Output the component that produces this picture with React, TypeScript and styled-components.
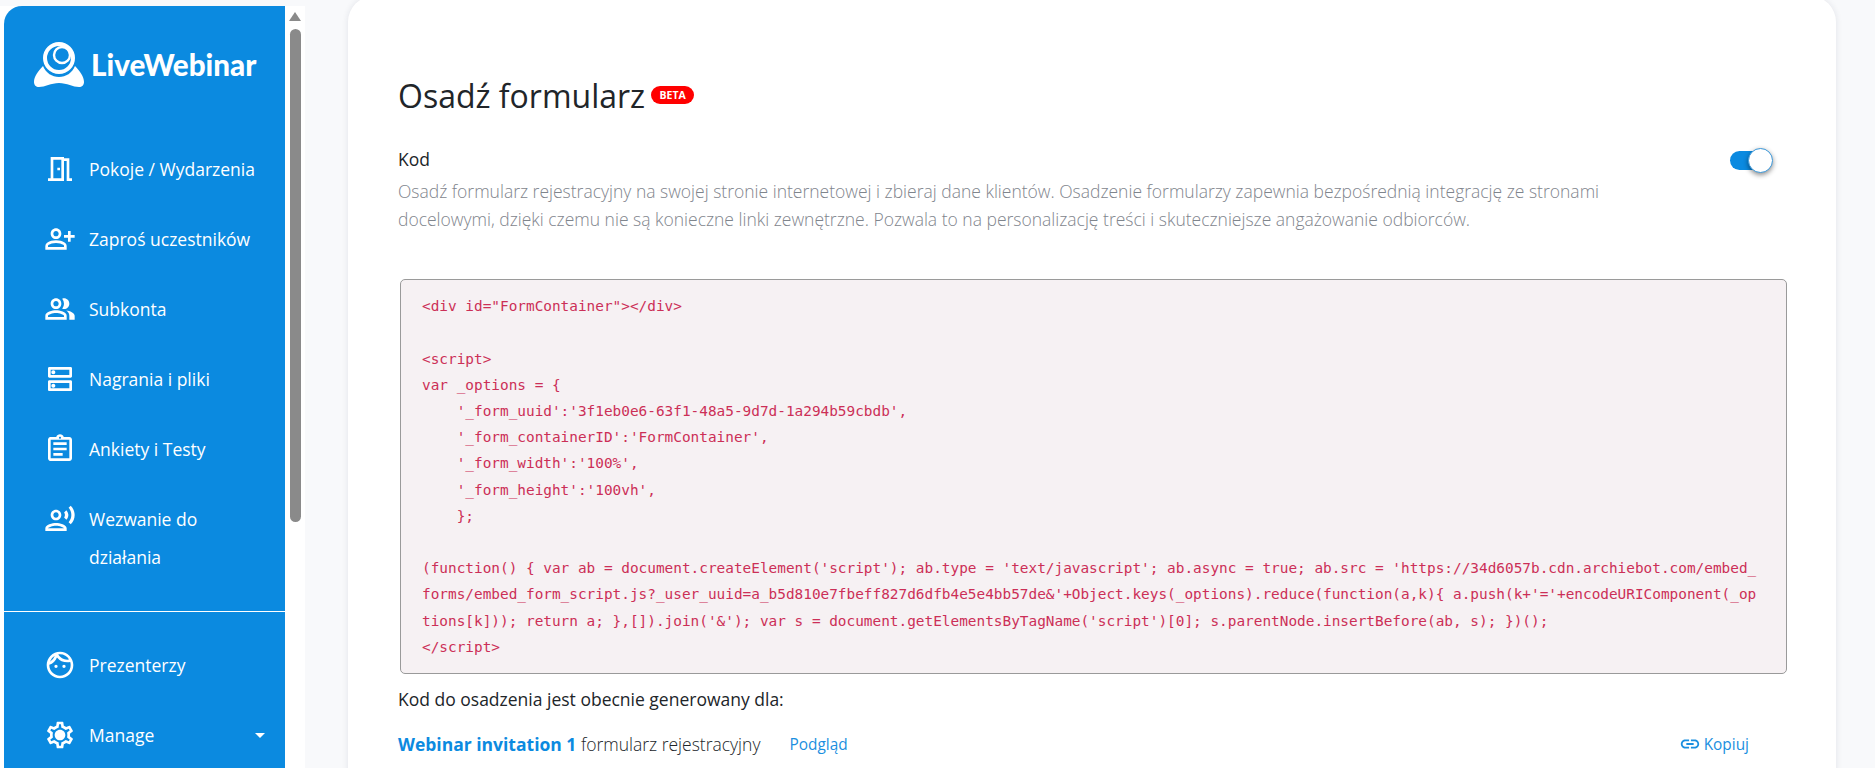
import React from "react";
import styled, { createGlobalStyle } from "styled-components";
import {
  MdOutlineMeetingRoom,
  MdOutlinePersonAddAlt,
  MdOutlinePeopleAlt,
  MdOutlineDns,
  MdOutlineAssignment,
  MdOutlineRecordVoiceOver,
  MdOutlineFace,
  MdOutlineSettings,
  MdLink,
} from "react-icons/md";

const GlobalStyle = createGlobalStyle`
  html, body {
    margin: 0;
    height: 100%;
    overflow: hidden;
    background: #f8f9fb;
    font-family: "Open Sans", "Liberation Sans", sans-serif;
  }
`;

const Page = styled.div`
  display: flex;
  height: 768px;
  overflow: hidden;
`;

const Rail = styled.div`
  flex: 0 0 304px;
  display: flex;
  height: 762px;
  margin-top: 6px;
  padding-left: 4px;
  box-sizing: border-box;
  background: #fff;
`;

const Sidebar = styled.nav`
  flex: 0 0 281px;
  height: 780px;
  background: #0b8ae0;
  border-top-left-radius: 18px;
  color: #fff;
`;

const LogoRow = styled.div`
  display: flex;
  align-items: center;
  gap: 6px;
  height: 128px;
  padding: 0 0 10px 29px;
  box-sizing: border-box;
`;

const LogoText = styled.span`
  font-family: Lato, "Open Sans", sans-serif;
  font-weight: 900;
  font-size: 29.6px;
  margin-top: -2px;
`;

const Item = styled.a`
  display: flex;
  align-items: flex-start;
  gap: 13px;
  padding: 16px 20px 16px 40px;
  font-size: 17.5px;
  line-height: 38px;
  color: #fff;
`;

const IconSlot = styled.span`
  position: relative;
  flex: 0 0 32px;
  height: 38px;
  display: flex;
  align-items: center;
  justify-content: center;
  font-size: 32px;
`;

const GearDot = styled.span`
  position: absolute;
  top: 15px;
  left: 12px;
  width: 8px;
  height: 8px;
  border-radius: 50%;
  background: #fff;
`;

const ItemLabel = styled.span<{ $wrap?: boolean }>`
  flex: 1;
  max-width: 160px;
  white-space: ${(p) => (p.$wrap ? "normal" : "nowrap")};
`;

const Caret = styled.span`
  align-self: center;
  width: 0;
  height: 0;
  margin-left: auto;
  border-left: 5px solid transparent;
  border-right: 5px solid transparent;
  border-top: 5px solid #fff;
`;

const Divider = styled.hr`
  margin: 19px 0 18px;
  border: 0;
  border-top: 1px solid #fff;
`;

const Scrollbar = styled.div`
  flex: 0 0 19px;
  display: flex;
  flex-direction: column;
  align-items: center;
  padding: 6px 4px 0;
  box-sizing: border-box;
`;

const ScrollArrow = styled.span`
  width: 0;
  height: 0;
  border-left: 6px solid transparent;
  border-right: 6px solid transparent;
  border-bottom: 9px solid #8a8a8a;
`;

const ScrollThumb = styled.span`
  width: 11px;
  height: 493px;
  margin-top: 8px;
  border-radius: 6px;
  background: #8a8a8a;
`;

const Main = styled.main`
  flex: 1;
  padding: 0 39px 0 43px;
  min-width: 0;
`;

const Card = styled.section`
  height: 800px;
  margin-top: -4px;
  padding: 0 49px 0 50px;
  box-sizing: border-box;
  background: #fff;
  border-radius: 26px 26px 0 0;
  box-shadow: 0 0 6px rgba(30, 40, 70, 0.1);
`;

const TitleRow = styled.div`
  display: flex;
  align-items: center;
  gap: 6px;
  padding-top: 78px;
  height: 44px;
`;

const Title = styled.h1`
  margin: 0;
  font-size: 32px;
  font-weight: 400;
  line-height: 44px;
  color: #212529;
`;

const Badge = styled.span`
  display: inline-flex;
  align-items: center;
  justify-content: center;
  width: 43px;
  height: 18px;
  margin-top: -2px;
  border-radius: 9px;
  background: #f00;
  color: #fff;
  font-size: 10.5px;
  font-weight: 700;
`;

const SettingRow = styled.div`
  display: flex;
  justify-content: space-between;
  margin-top: 27px;
`;

const SettingLabel = styled.div`
  font-size: 17.5px;
  line-height: 28px;
  color: #212529;
`;

const Description = styled.p`
  margin: 5px 0 0;
  max-width: 1240px;
  font-size: 17.5px;
  font-weight: 300;
  line-height: 27.6px;
  color: #7f858d;
`;

const Toggle = styled.span`
  position: relative;
  flex: 0 0 40px;
  width: 40px;
  height: 19px;
  margin: 6px 17px 0 0;
  border-radius: 10px;
  background: #0b8ae0;
`;

const Knob = styled.span`
  position: absolute;
  top: -3px;
  right: -3px;
  width: 23px;
  height: 23px;
  border-radius: 50%;
  background: #fff;
  border: 1px solid #3b97d8;
  box-shadow: 0 2px 5px rgba(0, 0, 0, 0.45);
`;

const CodeBox = styled.pre`
  margin: 46px 0 0 2px;
  height: 395px;
  padding: 13px 23px 0 21px;
  box-sizing: border-box;
  background: #f6f1f3;
  border: 1px solid #9a9a9a;
  border-radius: 5px;
  overflow: hidden;
  white-space: pre-wrap;
  word-break: break-all;
  font-family: "DejaVu Sans Mono", "Liberation Mono", monospace;
  font-size: 14.4px;
  line-height: 26.2px;
  color: #cc2f57;
`;

const GeneratedFor = styled.div`
  margin-top: 11px;
  font-size: 17.5px;
  line-height: 28px;
  color: #212529;
`;

const FooterRow = styled.div`
  display: flex;
  align-items: center;
  margin-top: 17px;
  height: 28px;
`;

const FormName = styled.span`
  font-size: 17.5px;
  font-weight: 300;
  color: #212529;
`;

const Strong = styled.b`
  font-weight: 700;
  color: #0b8ae0;
`;

const Preview = styled.a`
  margin-left: 29px;
  font-size: 15.4px;
  font-weight: 500;
  color: #1b8fe0;
`;

const Copy = styled.a`
  display: flex;
  align-items: center;
  gap: 3px;
  margin-left: auto;
  margin-right: 38px;
  font-size: 15.4px;
  font-weight: 500;
  color: #1b8fe0;
`;

const LogoIcon = () => (
  <svg width="52" height="46" viewBox="0 0 52 46" fill="none">
    <path
      fill="#fff"
      d="M10 24C5 29 1 35 1 40c0 3 2 5 5 5 6 0 12-4 20-4s14 4 20 4c3 0 5-2 5-5 0-5-4-11-9-16-3 7-9 11-16 11s-13-4-16-11Z"
    />
    <circle cx="26" cy="16" r="14" stroke="#fff" strokeWidth="4" fill="#0b8ae0" />
    <circle cx="29" cy="13" r="8" stroke="#fff" strokeWidth="2.4" fill="#0b8ae0" />
  </svg>
);

const navTop = [
  { icon: <MdOutlineMeetingRoom />, label: "Pokoje / Wydarzenia" },
  { icon: <MdOutlinePersonAddAlt />, label: "Zaproś uczestników" },
  { icon: <MdOutlinePeopleAlt />, label: "Subkonta" },
  { icon: <MdOutlineDns />, label: "Nagrania i pliki" },
  { icon: <MdOutlineAssignment />, label: "Ankiety i Testy" },
  { icon: <MdOutlineRecordVoiceOver />, label: "Wezwanie do działania", wrap: true },
];

const code = `<div id="FormContainer"></div>

<script>
var _options = {
    '_form_uuid':'3f1eb0e6-63f1-48a5-9d7d-1a294b59cbdb',
    '_form_containerID':'FormContainer',
    '_form_width':'100%',
    '_form_height':'100vh',
    };

(function() { var ab = document.createElement('script'); ab.type = 'text/javascript'; ab.async = true; ab.src = 'https://34d6057b.cdn.archiebot.com/embed_forms/embed_form_script.js?_user_uuid=a_b5d810e7fbeff827d6dfb4e5e4bb57de&'+Object.keys(_options).reduce(function(a,k){ a.push(k+'='+encodeURIComponent(_options[k])); return a; },[]).join('&'); var s = document.getElementsByTagName('script')[0]; s.parentNode.insertBefore(ab, s); })();
</script>`;

export default function App() {
  return (
    <Page>
      <GlobalStyle />
      <Rail>
        <Sidebar>
          <LogoRow>
            <LogoIcon />
            <LogoText>LiveWebinar</LogoText>
          </LogoRow>
          {navTop.map((n) => (
            <Item key={n.label}>
              <IconSlot>{n.icon}</IconSlot>
              <ItemLabel $wrap={n.wrap}>{n.label}</ItemLabel>
            </Item>
          ))}
          <Divider />
          <Item>
            <IconSlot>
              <MdOutlineFace />
            </IconSlot>
            <ItemLabel>Prezenterzy</ItemLabel>
          </Item>
          <Item>
            <IconSlot>
              <MdOutlineSettings />
              <GearDot />
            </IconSlot>
            <ItemLabel>Manage</ItemLabel>
            <Caret />
          </Item>
        </Sidebar>
        <Scrollbar>
          <ScrollArrow />
          <ScrollThumb />
        </Scrollbar>
      </Rail>
      <Main>
        <Card>
          <TitleRow>
            <Title>Osadź formularz</Title>
            <Badge>BETA</Badge>
          </TitleRow>
          <SettingRow>
            <div>
              <SettingLabel>Kod</SettingLabel>
              <Description>
                Osadź formularz rejestracyjny na swojej stronie internetowej i zbieraj dane klientów. Osadzenie
                formularzy zapewnia bezpośrednią integrację ze stronami docelowymi, dzięki czemu nie są konieczne linki
                zewnętrzne. Pozwala to na personalizację treści i skuteczniejsze angażowanie odbiorców.
              </Description>
            </div>
            <Toggle>
              <Knob />
            </Toggle>
          </SettingRow>
          <CodeBox>{code}</CodeBox>
          <GeneratedFor>Kod do osadzenia jest obecnie generowany dla:</GeneratedFor>
          <FooterRow>
            <FormName>
              <Strong>Webinar invitation 1</Strong> formularz rejestracyjny
            </FormName>
            <Preview>Podgląd</Preview>
            <Copy>
              <MdLink size={22} />
              Kopiuj
            </Copy>
          </FooterRow>
        </Card>
      </Main>
    </Page>
  );
}
